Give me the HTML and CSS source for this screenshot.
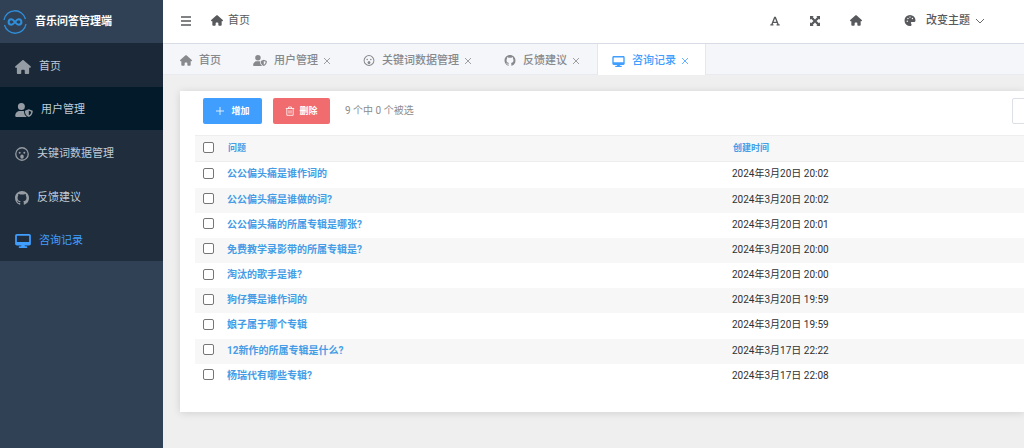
FILE: index.html
```html
<!DOCTYPE html>
<html lang="zh-CN">
<head>
<meta charset="utf-8">
<title>音乐问答管理端</title>
<link rel="stylesheet" href="styles.css">
</head>
<body>
<svg class="sprite" aria-hidden="true">
  <symbol id="home" viewBox="0 0 576 512"><path d="M575.8 255.5c0 18-15 32.1-32 32.1h-32l.7 160.2c0 2.7-.2 5.4-.5 8.1V472c0 22.1-17.9 40-40 40H392c-22.1 0-40-17.9-40-40v-88c0-17.7-14.3-32-32-32h-64c-17.7 0-32 14.3-32 32v88c0 22.1-17.9 40-40 40h-80c-22.1 0-40-17.9-40-40V287.6H32c-18 0-32-14-32-32.1 0-9 3-17 10-24L266.4 8c7-7 15-8 22-8s15 2 21 7l255.400 224.500c8 7 12 15 11 24z"/></symbol>
  <symbol id="user" viewBox="0 0 640 512"><path d="M224 256A128 128 0 1 0 224 0a128 128 0 0 0 0 256zm96 50c-13-8-28-12-45-12H170C76 294 0 370 0 464c0 26 22 48 48 48h352c8 0 14-2 20-5-60-39-98-100-100-201z"/><path fill-rule="evenodd" d="M496 224l144 56c0 110-40 190-144 232-104-42-144-122-144-232zm0 58v170c56-29 82-76 87-136z"/></symbol>
  <symbol id="face" viewBox="0 0 24 24"><circle cx="12" cy="12" r="10.700" fill="none" stroke="currentColor" stroke-width="2.200"/><circle cx="8" cy="10" r="1.700"/><circle cx="16" cy="10" r="1.700"/><ellipse cx="12" cy="16.500" rx="3" ry="3.500"/></symbol>
  <symbol id="github" viewBox="0 0 16 16"><path d="M8 0C3.580 0 0 3.580 0 8c0 3.540 2.290 6.530 5.470 7.590.4.070.55-.17.55-.38 0-.19-.01-.82-.01-1.490-2.010.37-2.530-.49-2.690-.94-.09-.23-.48-.94-.82-1.130-.28-.15-.68-.52-.01-.53.63-.01 1.080.58 1.230.82.72 1.210 1.870.87 2.330.66.070-.52.28-.87.51-1.070-1.780-.2-3.640-.89-3.640-3.950 0-.87.31-1.590.82-2.150-.08-.2-.36-1.020.08-2.120 0 0 .67-.21 2.200.82.64-.18 1.320-.27 2-.27s1.360.09 2 .27c1.530-1.040 2.200-.82 2.200-.82.44 1.100.16 1.920.08 2.120.51.56.82 1.270.82 2.150 0 3.070-1.870 3.750-3.650 3.950.29.25.54.73.54 1.480 0 1.070-.01 1.930-.01 2.200 0 .21.15.46.55.38A8.010 8.010 0 0 0 16 8c0-4.420-3.580-8-8-8z"/></symbol>
  <symbol id="desktop" viewBox="0 0 576 512"><path fill-rule="evenodd" d="M64 0h448c35 0 64 29 64 64v288c0 35-29 64-64 64H346l11 32h59c18 0 32 14 32 32s-14 32-32 32H160c-18 0-32-14-32-32s14-32 32-32h59l11-32H64c-35 0-64-29-64-64V64C0 29 29 0 64 0zm0 64v224h448V64z"/></symbol>
  <symbol id="bars" viewBox="0 0 10 10"><path d="M0 1h10M0 5h10M0 9h10" stroke="currentColor" stroke-width="1.300"/></symbol>
  <symbol id="font" viewBox="0 0 16 16"><path fill-rule="evenodd" d="M6.700 1h2.600l4.700 12h1.500v2h-5v-2h1.200l-.8-2H5.100l-.8 2h1.200v2h-5v-2H2zM8 4L5.900 9h4.200z"/></symbol>
  <symbol id="expand" viewBox="0 0 16 16"><path d="M0 0h6L4.300 1.700 8 5.500l3.700-3.800L10 0h6v6l-1.700-1.700L10.500 8l3.800 3.700L16 10v6h-6l1.700-1.700L8 10.500l-3.700 3.800L6 16H0v-6l1.700 1.700L5.500 8 1.700 4.300 0 6z"/></symbol>
  <symbol id="palette" viewBox="0 0 512 512"><path fill-rule="evenodd" d="M512 256c0 53-38 72-80 72h-88c-27 0-48 21-48 48 0 26 32 38 32 72 0 35-24 62-72 64A256 256 0 1 1 512 256zM128 320a32 32 0 1 0 0-64 32 32 0 0 0 0 64zm32-128a32 32 0 1 0 0-64 32 32 0 0 0 0 64zm96-64a32 32 0 1 0 0-64 32 32 0 0 0 0 64zm112 64a32 32 0 1 0 0-64 32 32 0 0 0 0 64z"/></symbol>
  <symbol id="close" viewBox="0 0 8 8"><path d="M1 1l6 6M7 1L1 7" stroke="currentColor" stroke-width=".8"/></symbol>
  <symbol id="chevron" viewBox="0 0 10 10"><path d="M1 3l4 4 4-4" fill="none" stroke="currentColor" stroke-width=".9"/></symbol>
  <symbol id="plus" viewBox="0 0 10 10"><path d="M5 1v8M1 5h8" stroke="currentColor" stroke-width=".8"/></symbol>
  <symbol id="trash" viewBox="0 0 10 10"><path d="M.8 2.500h8.400M3.500 2.500V1h3v1.500M1.800 2.500v6.800h6.400V2.500M4 4.300v3.200M6 4.300v3.200" fill="none" stroke="currentColor" stroke-width=".8"/></symbol>
</svg>
<div class="app">
  <aside class="sidebar">
    <div class="brand">
      <svg class="brand-logo" viewBox="0 0 24 24" fill="none" stroke="#2f8fdb" aria-hidden="true"><path d="M1 10A11 11 0 0 1 22.500 9M23 14A11 11 0 0 1 1.500 15" stroke-width="1.300"/><path d="M12 12c-2-2.500-2.700-2.800-3.600-2.800a2.800 2.800 0 0 0 0 5.600C9.300 14.800 10 14.500 12 12s2.700-2.800 3.600-2.800a2.800 2.800 0 0 1 0 5.600C14.700 14.800 14 14.500 12 12z" stroke-width="2"/></svg>
      <span>音乐问答管理端</span>
    </div>
    <nav class="menu">
      <a class="menu-item menu-item-home" href="#"><svg class="icon icon-wide"><use href="#home"/></svg>首页</a>
      <a class="menu-item menu-item-hover" href="#"><svg class="icon icon-wider"><use href="#user"/></svg>用户管理</a>
      <a class="menu-item" href="#"><svg class="icon icon-large"><use href="#face"/></svg>关键词数据管理</a>
      <a class="menu-item" href="#"><svg class="icon icon-large"><use href="#github"/></svg>反馈建议</a>
      <a class="menu-item menu-item-active" href="#"><svg class="icon icon-wide"><use href="#desktop"/></svg>咨询记录</a>
    </nav>
  </aside>
  <main class="main">
    <header class="topbar">
      <button class="tool" type="button" aria-label="菜单"><svg class="icon icon-small"><use href="#bars"/></svg></button>
      <a class="crumb" href="#"><svg class="icon icon-medium"><use href="#home"/></svg>首页</a>
      <div class="tools">
        <button class="tool" type="button" aria-label="字体"><svg class="icon icon-small"><use href="#font"/></svg></button>
        <button class="tool" type="button" aria-label="全屏"><svg class="icon icon-small"><use href="#expand"/></svg></button>
        <button class="tool" type="button" aria-label="首页"><svg class="icon icon-medium"><use href="#home"/></svg></button>
        <button class="tool theme" type="button"><svg class="icon icon-medium"><use href="#palette"/></svg><span>改变主题</span><svg class="icon icon-small"><use href="#chevron"/></svg></button>
      </div>
    </header>
    <nav class="tabs">
      <div class="tab"><a href="#"><svg class="icon icon-medium"><use href="#home"/></svg>首页</a></div>
      <div class="tab"><a href="#"><svg class="icon icon-tab-user"><use href="#user"/></svg>用户管理</a><button type="button" aria-label="关闭"><svg class="icon icon-tiny"><use href="#close"/></svg></button></div>
      <div class="tab"><a href="#"><svg class="icon icon-medium"><use href="#face"/></svg>关键词数据管理</a><button type="button" aria-label="关闭"><svg class="icon icon-tiny"><use href="#close"/></svg></button></div>
      <div class="tab"><a href="#"><svg class="icon icon-medium"><use href="#github"/></svg>反馈建议</a><button type="button" aria-label="关闭"><svg class="icon icon-tiny"><use href="#close"/></svg></button></div>
      <div class="tab tab-active"><a href="#"><svg class="icon icon-tab-desktop"><use href="#desktop"/></svg>咨询记录</a><button type="button" aria-label="关闭"><svg class="icon icon-tiny"><use href="#close"/></svg></button></div>
    </nav>
    <section class="content">
      <div class="card">
        <div class="actions">
          <button class="btn btn-add" type="button"><svg class="icon icon-small"><use href="#plus"/></svg>增加</button>
          <button class="btn btn-delete" type="button"><svg class="icon icon-small"><use href="#trash"/></svg>删除</button>
          <span class="count">9 个中 0 个被选</span>
          <input class="search" type="text" aria-label="搜索">
        </div>
        <table class="records">
          <thead>
            <tr><th class="col-check"><input type="checkbox" aria-label="全选"></th><th class="col-question"><a href="#">问题</a></th><th><a href="#">创建时间</a></th></tr>
          </thead>
          <tbody>
            <tr><td><input type="checkbox" aria-label="选择 1"></td><td><a href="#">公公偏头痛是谁作词的</a></td><td>2024年3月20日 20:02</td></tr>
            <tr><td><input type="checkbox" aria-label="选择 2"></td><td><a href="#">公公偏头痛是谁做的词?</a></td><td>2024年3月20日 20:02</td></tr>
            <tr><td><input type="checkbox" aria-label="选择 3"></td><td><a href="#">公公偏头痛的所属专辑是哪张?</a></td><td>2024年3月20日 20:01</td></tr>
            <tr><td><input type="checkbox" aria-label="选择 4"></td><td><a href="#">免费教学录影带的所属专辑是?</a></td><td>2024年3月20日 20:00</td></tr>
            <tr><td><input type="checkbox" aria-label="选择 5"></td><td><a href="#">淘汰的歌手是谁?</a></td><td>2024年3月20日 20:00</td></tr>
            <tr><td><input type="checkbox" aria-label="选择 6"></td><td><a href="#">狗仔舞是谁作词的</a></td><td>2024年3月20日 19:59</td></tr>
            <tr><td><input type="checkbox" aria-label="选择 7"></td><td><a href="#">娘子属于哪个专辑</a></td><td>2024年3月20日 19:59</td></tr>
            <tr><td><input type="checkbox" aria-label="选择 8"></td><td><a href="#">12新作的所属专辑是什么?</a></td><td>2024年3月17日 22:22</td></tr>
            <tr><td><input type="checkbox" aria-label="选择 9"></td><td><a href="#">杨瑞代有哪些专辑?</a></td><td>2024年3月17日 22:08</td></tr>
          </tbody>
        </table>
      </div>
    </section>
  </main>
</div>
</body>
</html>
```
FILE: styles.css
```css
* { box-sizing: border-box; }

body {
  margin: 0;
  font: 11px/16px Roboto, "Noto Sans CJK SC", sans-serif;
  color: #303133;
}

a { color: inherit; text-decoration: none; }

button {
  padding: 0;
  border: 0;
  background: none;
  color: inherit;
  font: inherit;
}

.sprite { display: none; }

.icon { flex: none; display: block; width: 12px; height: 12px; fill: currentColor; }
.icon-tiny { width: 8px; height: 8px; }
.icon-small { width: 10px; height: 10px; }
.icon-medium { width: 12px; height: 11px; }
.icon-large { width: 14px; height: 14px; }
.icon-wide { width: 16px; height: 14px; }
.icon-wider { width: 18px; height: 14px; }
.icon-tab-user { width: 14px; height: 11px; }
.icon-tab-desktop { width: 13px; height: 11px; }

.app { display: flex; min-height: 100vh; }

/* Sidebar */
.sidebar { flex: none; width: 163px; background: #304156; }

.brand {
  display: flex;
  align-items: center;
  gap: 8px;
  height: 43px;
  padding: 0 3px;
  color: #fff;
  font-weight: 700;
}
.brand-logo { width: 24px; height: 24px; }

.menu {
  display: grid;
  grid-auto-rows: 1fr;
  min-height: 218px;
  background: #202d3d;
  color: #bfcbd9;
}
.menu-item { display: flex; align-items: center; gap: 8px; padding: 4px 15px 0; }
.menu-item .icon { color: #969ca3; }
.menu-item-home { background: #1b2837; }
.menu-item-hover { background: #021a2a; }
.menu-item-active, .menu-item-active .icon { color: #409eff; }

/* Top bar */
.main { flex: 1; min-width: 0; display: flex; flex-direction: column; background: #efefef; }

.topbar {
  display: flex;
  align-items: center;
  gap: 20px;
  height: 44px;
  padding: 0 39px 2px 18px;
  border-bottom: 1px solid #d8dce5;
  background: #fff;
  color: #58595c;
}
.crumb { display: flex; align-items: center; gap: 5px; }
.tools { display: flex; align-items: center; gap: 30px; margin-left: auto; }
.theme { display: flex; align-items: center; gap: 10px; margin-left: 12px; font-weight: 500; }
.theme .icon-small { margin-left: -5px; }

/* Tabs */
.tabs {
  display: flex;
  height: 31px;
  padding-left: 2px;
  border-bottom: 1px solid #e8eaef;
  background: #f4f6fa;
  color: #87898d;
  font-weight: 500;
}
.tab { display: flex; align-items: center; gap: 5px; padding: 3px 17px 0 15px; }
.tab a { display: flex; align-items: center; gap: 7px; }
.tab-active {
  margin-bottom: -1px;
  padding: 3px 16px 0 14px;
  border-right: 1px solid #e4e7ed;
  border-left: 1px solid #e4e7ed;
  background: #fff;
  color: #409eff;
}

/* Content */
.content { flex: 1; padding: 16px 0 36px 17px; overflow: hidden; }
.card {
  padding: 7px 0 23px 15px;
  background: #fff;
  box-shadow: 0 1px 8px rgba(0, 0, 0, .13);
}

.actions {
  display: flex;
  align-items: center;
  gap: 11px;
  padding-left: 8px;
  margin-bottom: 11px;
}
.btn {
  display: flex;
  align-items: center;
  justify-content: center;
  gap: 5px;
  height: 26px;
  border-radius: 2px;
  color: #fff;
  font-size: 9px;
  font-weight: 700;
}
.btn-add { gap: 6px; width: 59px; background: #409eff; }
.btn-delete { gap: 4px; width: 57px; background: #f06c6e; }
.count { margin-left: 4px; color: #8c8c8c; font-size: 10px; }
.search {
  flex: none;
  width: 160px;
  height: 26px;
  margin: 0 -148px 0 auto;
  border: 1px solid #dcdfe6;
  border-radius: 2px;
}

.records {
  width: 100%;
  height: 254px;
  table-layout: fixed;
  border-collapse: collapse;
  font-size: 10px;
  line-height: 14px;
}
.records th, .records td { padding: 0 0 1px; text-align: left; }
.records a { color: #459ce6; font-weight: 700; }
.records thead tr { height: 26px; background: #f7f7f7; border-top: 1px solid #eee; border-bottom: 1px solid #eee; }
.records th { padding-left: 1px; font-size: 9px; }
.records .col-check { width: 32px; padding-left: 0; }
.records .col-question { width: 505px; }
.records tbody tr:nth-child(even) { background: #f7f7f7; }
.records input {
  appearance: none;
  display: block;
  width: 11px;
  height: 11px;
  margin: 0 0 2px 8px;
  border: 1px solid #767676;
  border-radius: 2px;
  background: #fff;
}
```
